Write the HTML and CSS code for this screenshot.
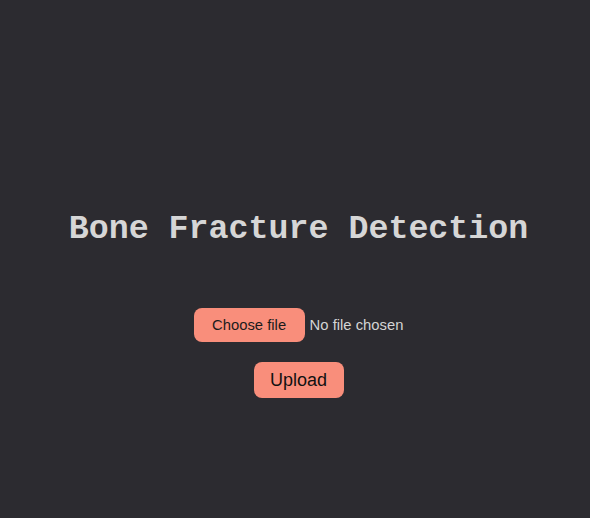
FILE: index.html
```html
<!DOCTYPE html>
<html>
<head>
<meta charset="utf-8">
<title>Bone Fracture Detection</title>
<link rel="stylesheet" href="styles.css">
</head>
<body>
<main class="page">
  <h1 class="title">Bone Fracture Detection</h1>
  <form class="upload-form">
    <label class="file-field">
      <input class="file-input" type="file" name="file">
      <span class="file-btn">Choose file</span>
      <span class="file-name">No file chosen</span>
    </label>
    <button class="upload-btn" type="button">Upload</button>
  </form>
</main>
</body>
</html>
```

FILE: styles.css
```css
html, body {
  margin: 0;
  padding: 0;
  background: #2c2b30;
  height: 100%;
}
.page {
  min-height: 100%;
  display: flex;
  flex-direction: column;
  align-items: center;
  justify-content: center;
  padding-left: 7px;
  box-sizing: border-box;
}
.title {
  font-family: "Liberation Mono", "Courier New", monospace;
  font-weight: bold;
  font-size: 33.3px;
  color: #d6d6d6;
  margin: 0 0 58px 0;
  line-height: 42px;
}
.upload-form {
  display: flex;
  flex-direction: column;
  align-items: center;
  gap: 20px;
  margin-bottom: -88px;
}
.file-field {
  display: flex;
  align-items: center;
  gap: 5px;
  font-family: "Liberation Sans", Arial, sans-serif;
  font-size: 14.8px;
  cursor: pointer;
}
.file-input {
  display: none;
}
.file-btn {
  display: flex;
  align-items: center;
  justify-content: center;
  width: 111px;
  height: 34px;
  background: #f98e7b;
  color: #1b1b1b;
  border-radius: 8px;
}
.file-name {
  color: #d4d4d4;
}
.upload-btn {
  font-family: "Liberation Sans", Arial, sans-serif;
  font-size: 18px;
  background: #f98e7b;
  color: #111;
  border: none;
  border-radius: 8px;
  height: 36px;
  width: 90px;
  padding: 0;
  cursor: pointer;
}
```
